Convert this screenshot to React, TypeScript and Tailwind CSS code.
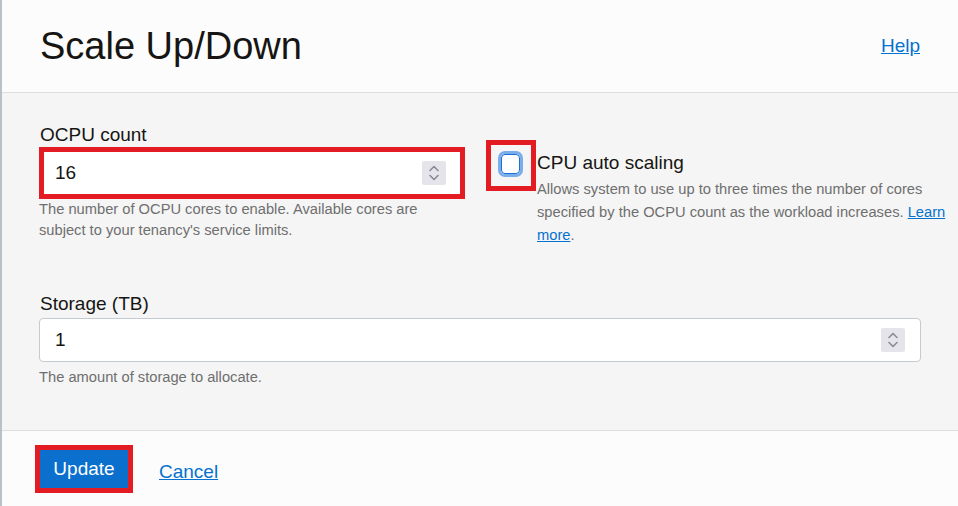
import React from 'react';

const Spinner: React.FC = () => (
  <div className="w-[24px] h-[24px] bg-[#e4e4ea] rounded-[2px] flex items-center justify-center">
    <svg width="14" height="18" viewBox="0 0 14 18" fill="none" stroke="#8a8a97" strokeWidth="1.6" strokeLinecap="round" strokeLinejoin="round">
      <path d="M3 6.5 L7 2.5 L11 6.5" />
      <path d="M3 11.5 L7 15.5 L11 11.5" />
    </svg>
  </div>
);

const App: React.FC = () => {
  return (
    <div
      className="w-[958px] h-[506px] flex flex-col bg-[#f5f5f5] border-l-2 border-[#b9c0cc] text-[#161513] overflow-hidden"
      style={{ fontFamily: '"Liberation Sans", Arial, sans-serif' }}
    >
      {/* header */}
      <div className="h-[93px] shrink-0 bg-[#fcfcfc] border-b border-[#dedede] flex items-center justify-between pl-[38px] pr-[38px]">
        <h1 className="text-[38px] leading-none">Scale Up/Down</h1>
        <a href="#" className="text-[19px] text-[#0572ce] underline">Help</a>
      </div>

      {/* body */}
      <div className="flex-1 pl-[37px] pt-[31px]">
        <div className="flex items-start">
          <div className="w-[426px]">
            <div className="text-[19px] leading-[22px] pl-[1px]">OCPU count</div>
            <div className="mt-[1px] border-[5px] border-[#e31c24] h-[52px] bg-white flex items-center justify-between pl-[11px] pr-[14px]">
              <span className="text-[19px]">16</span>
              <Spinner />
            </div>
            <p className="max-w-[400px] text-[14.7px] leading-[21px] text-[#6f6f6f]">
              The number of OCPU cores to enable. Available cores are subject to your tenancy's service limits.
            </p>
          </div>

          <div className="ml-[21px] mt-[16px] flex items-start">
            <div className="w-[50px] h-[51px] shrink-0 border-[5px] border-[#e31c24] flex items-start justify-center pt-[6px] pr-[1px]">
              <div className="w-[25px] h-[26px] rounded-[7px] border-[3px] border-[#7badec] bg-white">
                <div className="w-full h-full rounded-[4px] border border-[#1d6fd1]" />
              </div>
            </div>
            <div className="ml-[1px] pt-[10px] w-[418px]">
              <div className="text-[19px] leading-[26px]">CPU auto scaling</div>
              <p className="mt-[2px] text-[14.7px] leading-[23px] text-[#6f6f6f]">
                Allows system to use up to three times the number of cores specified by the OCPU count as the workload increases.{' '}
                <a href="#" className="text-[#0572ce] underline">Learn more</a>.
              </p>
            </div>
          </div>
        </div>

        <div className="mt-[46px] w-[882px]">
          <div className="text-[19px] leading-[22px] pl-[1px]">Storage (TB)</div>
          <div className="mt-[3px] h-[44px] bg-white border border-[#c5c9d0] rounded-[4px] flex items-center justify-between pl-[15px] pr-[15px]">
            <span className="text-[19px]">1</span>
            <Spinner />
          </div>
          <p className="mt-[5px] text-[14.7px] leading-[21px] text-[#6f6f6f]">The amount of storage to allocate.</p>
        </div>
      </div>

      {/* footer */}
      <div className="h-[76px] shrink-0 bg-[#fcfcfc] border-t border-[#dedede] flex items-start pl-[33px] pt-[14px]">
        <div className="border-[5px] border-[#e31c24]">
          <button className="w-[88px] h-[38px] bg-[#0a6fcd] text-white text-[19px]">Update</button>
        </div>
        <a href="#" className="ml-[26px] mt-[13px] text-[19px] text-[#0572ce] underline">Cancel</a>
      </div>
    </div>
  );
};

export default App;
